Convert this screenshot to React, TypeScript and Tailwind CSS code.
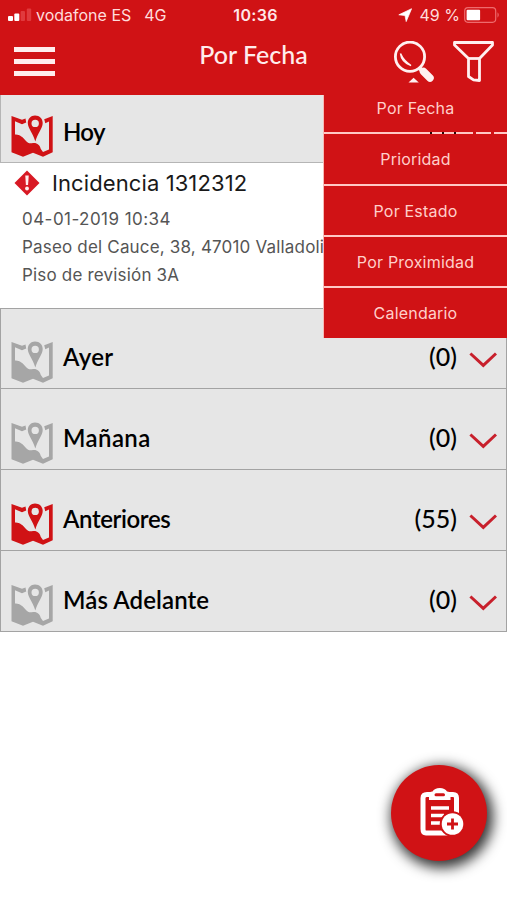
import React from "react";

const lato = "font-['Lato','Liberation_Sans',sans-serif]";

function MapIcon({ active }: { active: boolean }) {
  return (
    <svg viewBox="0 0 42 42" className={`h-[42px] w-[42px] shrink-0 ${active ? "text-[#d01215]" : "text-[#a6a6a6]"}`} fill="currentColor">
      <path
        fillRule="evenodd"
        d="M0.5 1 L11 4.8 L14.5 3.6 L15.2 7.4 L11 9.2 L4 6.2 V19.5 C8 19 12 22 15 26 C17 28.5 19 28.5 22 28 C26 27.5 29 30 29.8 34 L32 37 L38 34.6 V6.6 L34.3 8.2 L33.2 4.3 L41.7 1 V37.2 L32 41.7 L22 37.7 L12 41.7 L0.5 37.2 Z"
      />
      <path fillRule="evenodd" d="M24 0.6 C28.7 0.6 31.7 4 31.7 8 C31.7 13 26.5 18.5 24.3 26.6 C22.2 18.5 16.8 13 16.8 8 C16.8 4 19.8 0.6 24 0.6 Z M24.2 4.7 A3.7 3.7 0 1 0 24.2 12.1 A3.7 3.7 0 1 0 24.2 4.7 Z" />
    </svg>
  );
}

function Chevron() {
  return (
    <svg viewBox="0 0 28 16" className="h-4 w-7 shrink-0" fill="none" stroke="#c8202c" strokeWidth="3">
      <path d="M1.4 1.5 L14.3 13.4 L27 1.5" />
    </svg>
  );
}

const groups = [
  { name: "Ayer", count: 0, spacing: "tracking-[0.3px]" },
  { name: "Mañana", count: 0, spacing: "tracking-[0.4px]" },
  { name: "Anteriores", count: 55, spacing: "tracking-[-0.4px]" },
  { name: "Más Adelante", count: 0, spacing: "tracking-[0.1px]" },
];

function StatusBar() {
  return (
    <div className="grid h-[29px] grid-cols-3 items-center text-[16px] leading-5 text-[#ffdcdc]">
      <div className="flex items-center whitespace-nowrap pl-2">
        <svg viewBox="0 0 24 14" className="mr-1 h-3.5 w-6">
          <rect x="0" y="8" width="5" height="5" rx="1" fill="#fff" />
          <rect x="6.3" y="5.5" width="5" height="7.5" rx="1" fill="#fff" />
          <rect x="12.6" y="3" width="4.4" height="10" rx="1" fill="#e03a3d" />
          <rect x="18.8" y="0.5" width="4.4" height="12.5" rx="1" fill="#e03a3d" />
        </svg>
        <span>vodafone ES</span>
        <span className="ml-[13px]">4G</span>
      </div>
      <div className="pl-1 text-center font-semibold tracking-[0.3px] text-[#ffe8e8]">10:36</div>
      <div className="flex items-center justify-end whitespace-nowrap pr-[7px]">
        <svg viewBox="0 0 14 14" className="mr-2 h-3.5 w-3.5" fill="#fff">
          <path d="M13.6 0.7 L8.2 13.6 L7 7.6 L0.8 6.8 Z" stroke="#fff" strokeWidth="0.7" />
        </svg>
        <span>49 %</span>
        <svg viewBox="0 0 36 16" className="ml-1 h-4 w-9">
          <rect x="0.7" y="0.7" width="31" height="14.6" rx="3.2" fill="none" stroke="#ee6b6d" strokeWidth="1.2" />
          <rect x="2.6" y="2.8" width="13.5" height="10.4" rx="1" fill="#fff" />
          <path d="M33.5 5.3 Q36 8 33.5 10.7 Z" fill="#ee6b6d" />
        </svg>
      </div>
    </div>
  );
}

function Header() {
  return (
    <header className="h-[95px] bg-[#d01215]">
      <StatusBar />
      <div className="grid h-[66px] grid-cols-3">
        <button aria-label="Menú" className="ml-3.5 mt-[18px] flex h-[29px] w-[41px] flex-col justify-between">
          <span className="h-[5px] w-full bg-[#ffeded]" />
          <span className="h-[5px] w-full bg-[#ffeded]" />
          <span className="h-[5px] w-full bg-[#ffeded]" />
        </button>
        <h1 className={`${lato} mt-[9px] whitespace-nowrap text-center text-[25px] font-medium leading-8 text-[#ffecec]`}>Por Fecha</h1>
        <div className="flex justify-end pr-[13px] pt-3">
          <svg viewBox="0 0 42 44" className="mr-[18px] h-11 w-[42px]" fill="none" stroke="#fff0f0">
            <circle cx="17" cy="15.7" r="14.6" strokeWidth="2.8" />
            <path d="M7.5 12.5 Q8.5 21.5 18 24.5 Q10.5 19.5 7.5 12.5" fill="#fff0f0" strokeWidth="1.5" />
            <path d="M26 26.5 L30 30.5" strokeWidth="4" />
            <path d="M30.5 30.5 L37 37" strokeWidth="7.5" strokeLinecap="round" />
            <path d="M15.5 41.5 L20.6 36.7 L25.8 41.5 Z" fill="#fff0f0" stroke="none" />
          </svg>
          <svg viewBox="0 0 41 42" className="h-[42px] w-[41px]" fill="none" stroke="#fff0f0" strokeWidth="2.8" strokeLinejoin="round">
            <path d="M1.5 1.5 H39.5 V4 L26.5 17.5 V39.5 L20.5 38.8 L15.5 35.5 V17.5 L1.5 4 Z" />
            <path d="M15.5 17.5 H26.5" />
          </svg>
        </div>
      </div>
    </header>
  );
}

const options = ["Por Fecha", "Prioridad", "Por Estado", "Por Proximidad", "Calendario"];

function FilterMenu() {
  return (
    <div className="absolute right-0 top-[95px] w-[184px] border-l border-[#f9b9b5] text-center text-[16px] tracking-[0.2px] text-[#ffcfca]">
      {options.map((option, i) => (
        <div
          key={option}
          className={`relative bg-[#d01215] ${i === 0 ? "h-[39.3px] leading-[27px]" : "leading-[51px]"} ${i === 4 ? "h-[50px]" : "border-b-2 border-[#ffc8c5]"} ${i > 0 && i < 4 ? "h-[51.3px]" : ""}`}
        >
          {option}
          {i === 0 && (
            <svg viewBox="0 0 80 2" className="absolute -bottom-0.5 right-0 h-0.5 w-20">
              <path d="M3 1h2M15 1h2M27 1h2" stroke="#260808" strokeWidth="2" />
              <path d="M46 1h3M64 1h3" stroke="#d01215" strokeWidth="2" />
            </svg>
          )}
        </div>
      ))}
    </div>
  );
}

export default function App() {
  return (
    <div className="relative h-[900px] w-[507px] overflow-hidden bg-white font-['Inter','Liberation_Sans',sans-serif]">
      <Header />
      <section className="flex h-[68px] items-end border border-t-0 border-[#b5b5b5] bg-[#e6e6e6] pb-[5px] pl-2.5">
        <MapIcon active />
        <h2 className={`${lato} mb-[9px] ml-2.5 text-[24px] font-semibold leading-8 tracking-[-0.7px] text-black`}>Hoy</h2>
      </section>
      <article className="h-[145px] bg-white pt-[5px]">
        <div className="flex h-[30px] items-center pl-3.5">
          <svg viewBox="0 0 26 26" className="h-[26px] w-[26px]">
            <path d="M13 0.5 L25.5 13 L13 25.5 L0.5 13 Z" fill="#d81924" />
            <path d="M11.3 5.5 H14.7 L14.1 15 H11.9 Z" fill="#ffeded" />
            <circle cx="13" cy="18.5" r="1.9" fill="#ffeded" />
          </svg>
          <h3 className="ml-3 whitespace-nowrap text-[22px] leading-[30px] tracking-[0.1px] text-[#191919]">Incidencia 1312312</h3>
        </div>
        <div className="ml-[22px] mt-[6.5px] whitespace-nowrap text-[17px] leading-[28.3px] tracking-[0.18px] text-[#555]">
          <p className="tracking-[0.45px]">04-01-2019 10:34</p>
          <p>Paseo del Cauce, 38, 47010 Valladolid</p>
          <p>Piso de revisión 3A</p>
        </div>
      </article>
      {groups.map((group, i) => (
        <section key={group.name} className={`flex h-[81px] items-end border-x border-b border-[#a3a3a3] bg-[#e6e6e6] pb-[5px] pl-2.5 pr-[9px] ${i === 0 ? "border-t" : ""} ${i === 3 ? "h-[80px]" : ""}`}>
          <MapIcon active={group.count > 0} />
          <h2 className={`${lato} mb-2.5 ml-2.5 whitespace-nowrap text-[24px] font-semibold leading-8 text-black ${group.spacing}`}>{group.name}</h2>
          <span className={`${lato} mb-[11px] ml-auto mr-3 text-[25px] font-medium leading-8 text-black`}>({group.count})</span>
          <span className="mb-[15px]"><Chevron /></span>
        </section>
      ))}
      <FilterMenu />
      <button aria-label="Nueva incidencia" className="absolute left-[391px] top-[765px] flex h-24 w-24 items-center justify-center rounded-full bg-[#d01215] pb-[3px] pl-[5px] shadow-[3px_4px_13px_3px_rgba(0,0,0,0.8)]">
        <svg viewBox="0 0 44 48" className="h-12 w-11" fill="none">
          <path d="M7 6.5 H33 Q36.5 6.5 36.5 10 V42 Q36.5 45 33 45 H6 Q3 45 3 41 V10 Q3 6.5 7 6.5" stroke="#fff" strokeWidth="5" />
          <path d="M9 12 V7 Q9 3.5 12.5 3.5 Q14.5 0 19.8 0 Q25 0 27 3.5 Q30.5 3.5 30.5 7 V12 Z" fill="#fff" />
          <path d="M16 6.8 H23.5" stroke="#d01215" strokeWidth="3" strokeLinecap="round" />
          <path d="M11 20 H29 M11 27.5 H24 M11 35 H20" stroke="#fff" strokeWidth="3.6" />
          <circle cx="32.5" cy="36" r="12.8" fill="#d01215" />
          <circle cx="32.5" cy="36" r="10.8" fill="#fff" />
          <path d="M27 36 H38 M32.5 30.5 V41.5" stroke="#d01215" strokeWidth="2.8" />
        </svg>
      </button>
    </div>
  );
}
